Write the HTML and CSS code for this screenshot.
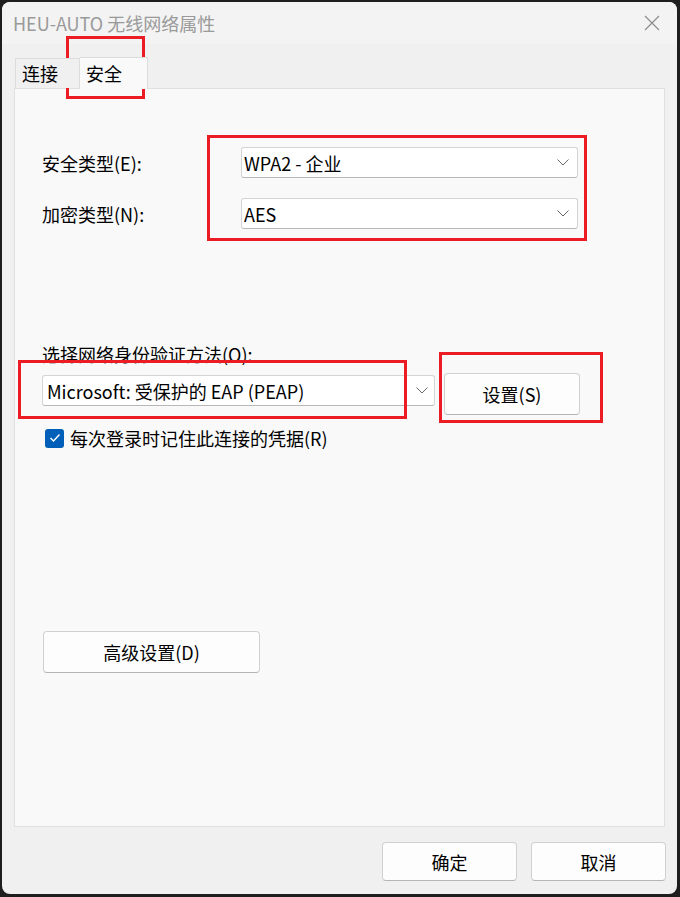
FILE: index.html
```html
<!DOCTYPE html>
<html lang="zh-CN">
<head>
<meta charset="utf-8">
<title>HEU-AUTO 无线网络属性</title>
<link rel="stylesheet" href="styles.css">
</head>
<body>
<div class="window">
  <div class="titlebar">
    <span class="title">HEU-AUTO 无线网络属性</span>
    <span class="close">
      <svg width="16" height="16" viewBox="0 0 16 16"><path d="M1 1L15 15M15 1L1 15" stroke="#8c8c8c" stroke-width="1.2" fill="none"/></svg>
    </span>
  </div>
  <div class="tabs">
    <div class="tab">连接</div>
    <div class="tab active">安全</div>
  </div>
  <div class="panel">
    <div class="field-row">
      <span class="label">安全类型(E):</span>
      <div class="combo wide"><span>WPA2 - 企业</span><svg class="chev" width="12" height="7" viewBox="0 0 12 7"><path d="M0.5 0.5L6 6L11.5 0.5" stroke="#666" stroke-width="1" fill="none"/></svg></div>
    </div>
    <div class="field-row second">
      <span class="label">加密类型(N):</span>
      <div class="combo wide"><span>AES</span><svg class="chev" width="12" height="7" viewBox="0 0 12 7"><path d="M0.5 0.5L6 6L11.5 0.5" stroke="#666" stroke-width="1" fill="none"/></svg></div>
    </div>
    <div class="method-label">选择网络身份验证方法(O):</div>
    <div class="method-row">
      <div class="combo method"><span>Microsoft: 受保护的 EAP (PEAP)</span><svg class="chev" width="12" height="7" viewBox="0 0 12 7"><path d="M0.5 0.5L6 6L11.5 0.5" stroke="#666" stroke-width="1" fill="none"/></svg></div>
      <button class="btn settings">设置(S)</button>
    </div>
    <label class="check-row">
      <span class="checkbox"><svg width="12" height="10" viewBox="0 0 12 10"><path d="M1.5 5L4.5 8L10.5 1.5" stroke="#fff" stroke-width="1.4" fill="none"/></svg></span>
      <span>每次登录时记住此连接的凭据(R)</span>
    </label>
    <button class="btn advanced">高级设置(D)</button>
  </div>
  <div class="footer">
    <button class="btn foot">确定</button>
    <button class="btn foot">取消</button>
  </div>
</div>
<div class="mark mark-tab"></div>
<div class="mark mark-types"></div>
<div class="mark mark-method"></div>
<div class="mark mark-settings"></div>
</body>
</html>
```
FILE: styles.css
```css
html, body {
  margin: 0;
  padding: 0;
}
body {
  width: 680px;
  height: 897px;
  background: #1e1e1e;
  position: relative;
  overflow: hidden;
  font-family: "Noto Sans CJK SC", "Noto Sans", sans-serif;
  font-size: 18px;
  color: #000;
}
.window {
  margin: 2px 0 0 2px;
  width: 675px;
  height: 892px;
  border-radius: 8px;
  background: #f0f0f0;
  overflow: hidden;
  display: flex;
  flex-direction: column;
}
.titlebar {
  height: 42px;
  flex: none;
  background: #f3f3f3;
  display: flex;
  align-items: center;
  justify-content: space-between;
  padding: 0 17px 0 11px;
}
.title {
  color: #9a9a9a;
  font-size: 18px;
  line-height: 22px;
}
.close {
  display: flex;
  width: 16px;
  height: 16px;
}
.tabs {
  height: 44px;
  flex: none;
  display: flex;
  align-items: flex-end;
  padding-left: 13px;
  position: relative;
  z-index: 1;
}
.tab {
  height: 30px;
  box-sizing: border-box;
  border: 1px solid #dcdcdc;
  border-bottom: none;
  padding: 0 6px;
  width: 65px;
  line-height: 28px;
  background: #f0f0f0;
}
.tab.active {
  height: 32px;
  width: 68px;
  margin-bottom: -1px;
  background: #f9f9f9;
  border-left: none;
  line-height: 30px;
}
.panel {
  margin: 0 12px 0 12px;
  height: 739px;
  box-sizing: border-box;
  flex: none;
  border: 1px solid #e0e0e0;
  background: #f9f9f9;
  padding: 58px 0 0 27px;
  display: flex;
  flex-direction: column;
  align-items: flex-start;
}
.field-row {
  display: flex;
  align-items: center;
  height: 31px;
}
.field-row.second {
  margin-top: 20px;
}
.label {
  width: 199px;
  flex: none;
}
.combo {
  height: 31px;
  box-sizing: border-box;
  background: #fff;
  border: 1px solid #d4d4d4;
  border-bottom-color: #b8b8b8;
  border-radius: 3px;
  display: flex;
  align-items: center;
  justify-content: space-between;
  padding: 0 8px 0 2px;
}
.combo.wide {
  width: 337px;
}
.combo.method {
  width: 393px;
  margin-top: 2px;
  padding-left: 4px;
  padding-right: 6px;
}
.chev {
  flex: none;
}
.method-label {
  margin-top: 114px;
  line-height: 22px;
}
.method-row {
  margin-top: 8px;
  display: flex;
  align-items: flex-start;
}
.btn {
  font-family: inherit;
  font-size: 18px;
  color: #000;
  background: #fdfdfd;
  border: 1px solid #d0d0d0;
  border-bottom-color: #b5b5b5;
  border-radius: 4px;
  box-sizing: border-box;
  padding: 0;
}
.settings {
  width: 136px;
  height: 42px;
  margin-left: 9px;
}
.check-row {
  display: flex;
  align-items: center;
  margin-top: 12px;
  height: 22px;
  margin-left: 3px;
}
.checkbox {
  width: 19px;
  height: 19px;
  border-radius: 3px;
  background: #005fb8;
  display: flex;
  align-items: center;
  justify-content: center;
  margin-right: 6px;
}
.advanced {
  width: 217px;
  height: 42px;
  margin-top: 182px;
  margin-left: 1px;
}
.footer {
  display: flex;
  justify-content: flex-end;
  gap: 14px;
  padding: 15px 11px 0 0;
}
.foot {
  width: 135px;
  height: 39px;
}
.mark {
  position: absolute;
  box-sizing: border-box;
  border: 3px solid #ec1c24;
}
.mark-tab {
  left: 66px;
  top: 36px;
  width: 79px;
  height: 63px;
}
.mark-types {
  left: 207px;
  top: 135px;
  width: 380px;
  height: 106px;
}
.mark-method {
  left: 18px;
  top: 360px;
  width: 389px;
  height: 59px;
}
.mark-settings {
  left: 439px;
  top: 352px;
  width: 164px;
  height: 71px;
}
```
